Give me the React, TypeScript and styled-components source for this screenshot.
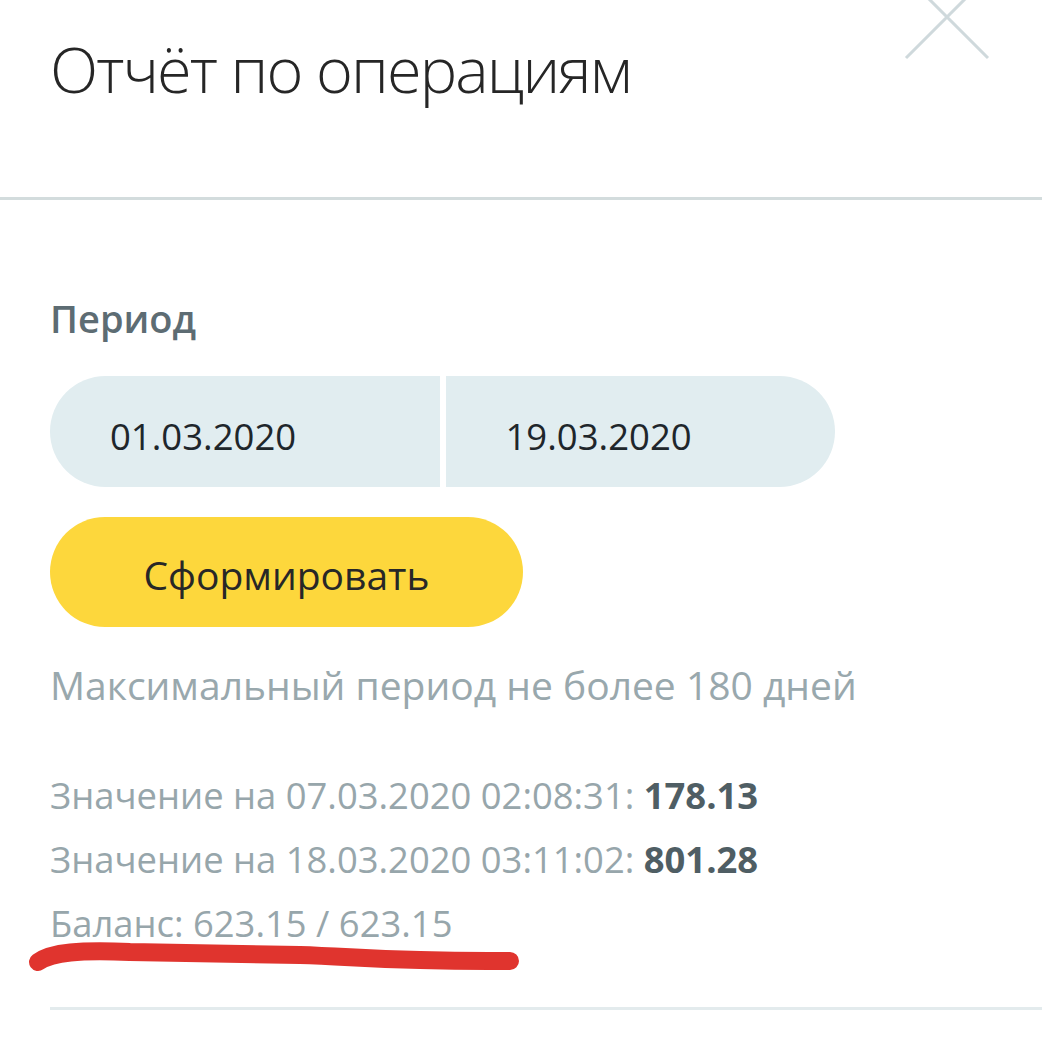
import React from 'react'
import styled, {createGlobalStyle} from 'styled-components'

const GlobalStyle = createGlobalStyle`
  html, body {
    margin: 0;
    padding: 0;
    background: #ffffff;
  }
  body {
    font-family: 'Open Sans', 'Noto Sans', sans-serif;
    color: #2a2a2a;
    overflow: hidden;
  }
`

const Screen = styled.div`
  position: relative;
  width: 1042px;
  height: 1052px;
  overflow: hidden;
  background: #fff;
`

const Header = styled.header`
  height: 200px;
  box-sizing: border-box;
  padding: 26px 50px 0;
  border-bottom: 3px solid #d3dcdd;
`

const Title = styled.h1`
  margin: 0;
  font-size: 63px;
  font-weight: 300;
  line-height: normal;
  color: #262626;
  letter-spacing: -1.9px;
`

const CloseButton = styled.button`
  position: absolute;
  top: -33px;
  right: 45px;
  width: 100px;
  height: 100px;
  padding: 0;
  border: none;
  background: transparent;
  cursor: pointer;
`

const Body = styled.main`
  padding: 92px 0 0 50px;
  display: flex;
  flex-direction: column;
`

const Label = styled.div`
  font-size: 38px;
  font-weight: 600;
  color: #5d6c73;
  line-height: normal;
`

const DateRow = styled.div`
  margin-top: 32px;
  display: flex;
  gap: 6px;
  width: 785px;
`

const DateField = styled.div<{side: 'left' | 'right'}>`
  flex: 1;
  height: 111px;
  display: flex;
  align-items: center;
  padding-left: 60px;
  padding-top: 8px;
  box-sizing: border-box;
  background: #e1edf0;
  font-size: 36.5px;
  color: #1e262b;
  border-radius: ${({side}) => (side === 'left' ? '56px 0 0 56px' : '0 56px 56px 0')};
`

const Submit = styled.button`
  margin-top: 30px;
  width: 473px;
  height: 110px;
  border: none;
  border-radius: 55px;
  background: #fdd73c;
  font-family: 'Open Sans', sans-serif;
  font-size: 39px;
  color: #272727;
  padding: 4px 0 0;
  cursor: pointer;
`

const Hint = styled.p`
  margin: 31px 0 0;
  font-size: 39px;
  line-height: normal;
  color: #99a8ad;
`

const Stats = styled.div`
  margin-top: 52px;
  display: flex;
  flex-direction: column;
`

const StatLine = styled.div`
  font-size: 36.4px;
  line-height: 64px;
  color: #97a6ab;
`

const Value = styled.b`
  font-weight: 700;
  color: #4f5e64;
`

const Divider = styled.hr`
  margin: 52px 0 0;
  border: none;
  height: 3px;
  background: #e3ebed;
`

const Marker = styled.svg`
  position: absolute;
  left: 0;
  top: 929px;
  pointer-events: none;
`

const stats = [
  {label: 'Значение на 07.03.2020 02:08:31: ', value: '178.13'},
  {label: 'Значение на 18.03.2020 03:11:02: ', value: '801.28'},
]

export default function App() {
  return (
    <Screen>
      <GlobalStyle />
      <Header>
        <Title>Отчёт по операциям</Title>
      </Header>
      <CloseButton aria-label="Закрыть">
        <svg width="100" height="100" viewBox="0 0 100 100">
          <path d="M9 9 L91 91 M91 9 L9 91" stroke="#cfd9dc" strokeWidth="3" fill="none" />
        </svg>
      </CloseButton>
      <Body>
        <Label>Период</Label>
        <DateRow>
          <DateField side="left">01.03.2020</DateField>
          <DateField side="right">19.03.2020</DateField>
        </DateRow>
        <Submit>Сформировать</Submit>
        <Hint>Максимальный период не более 180 дней</Hint>
        <Stats>
          {stats.map((s) => (
            <StatLine key={s.value}>
              {s.label}
              <Value>{s.value}</Value>
            </StatLine>
          ))}
          <StatLine>Баланс: 623.15 / 623.15</StatLine>
        </Stats>
        <Divider />
      </Body>
      <Marker width="560" height="60" viewBox="0 0 560 60">
        <path
          d="M38 33 C52 23, 80 21, 130 23 L300 26 C360 28, 400 33, 510 32"
          stroke="#e0342e"
          strokeWidth="18"
          strokeLinecap="round"
          fill="none"
        />
      </Marker>
    </Screen>
  )
}
